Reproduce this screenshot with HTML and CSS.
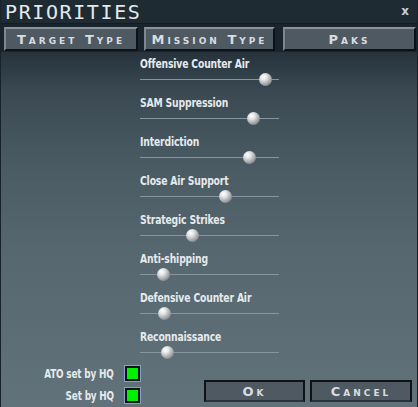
FILE: index.html
```html
<!DOCTYPE html>
<html>
<head>
<meta charset="utf-8">
<link rel="stylesheet" href="styles.css">
</head>
<body>
<div class="window">
  <div class="titlebar">
    <span class="title">PRIORITIES</span>
    <span class="close">x</span>
  </div>
  <div class="tabs">
    <div class="tab tab1">Target Type</div>
    <div class="tab tab2">Mission Type</div>
    <div class="tab tab3">Paks</div>
  </div>
  <div class="body">
    <div class="sliders">
      <div class="item"><div class="label">Offensive Counter Air</div><div class="track"><span class="knob" style="left:125px"></span></div></div>
      <div class="item"><div class="label">SAM Suppression</div><div class="track"><span class="knob" style="left:113px"></span></div></div>
      <div class="item"><div class="label">Interdiction</div><div class="track"><span class="knob" style="left:109px"></span></div></div>
      <div class="item"><div class="label">Close Air Support</div><div class="track"><span class="knob" style="left:85px"></span></div></div>
      <div class="item"><div class="label">Strategic Strikes</div><div class="track"><span class="knob" style="left:52px"></span></div></div>
      <div class="item"><div class="label">Anti-shipping</div><div class="track"><span class="knob" style="left:23px"></span></div></div>
      <div class="item"><div class="label">Defensive Counter Air</div><div class="track"><span class="knob" style="left:24px"></span></div></div>
      <div class="item"><div class="label">Reconnaissance</div><div class="track"><span class="knob" style="left:27px"></span></div></div>
    </div>
    <div class="bottom">
      <div class="checks">
        <div class="crow"><span class="clabel">ATO set by HQ</span><span class="check"></span></div>
        <div class="crow"><span class="clabel">Set by HQ</span><span class="check"></span></div>
      </div>
      <div class="buttons">
        <div class="btn ok">Ok</div>
        <div class="btn cancel">Cancel</div>
      </div>
    </div>
  </div>
</div>
</body>
</html>
```
FILE: styles.css
```css
* { box-sizing: border-box; }
html, body { margin: 0; padding: 0; }
body { background: #1c2830; width: 418px; height: 407px; overflow: hidden; }
.window {
  width: 418px; height: 407px;
  display: flex; flex-direction: column;
  border-left: 1px solid #17222a;
  border-right: 1px solid #17222a;
}
.titlebar {
  height: 24px;
  background: #1f2b33;
  display: flex; align-items: center; justify-content: space-between;
  padding: 0 8px 0 4px;
  border-bottom: 1px solid #141d23;
}
.title {
  font-family: "DejaVu Sans Mono", monospace;
  font-size: 20px;
  letter-spacing: 1.6px;
  color: #e2e8ec;
  line-height: 24px;
  margin-top: 1px;
}
.close {
  font-family: "DejaVu Sans", sans-serif;
  font-weight: bold;
  font-size: 12px;
  color: #c8ced2;
  margin-top: -2px;
}
.tabs {
  height: 28px;
  background: #19242c;
  display: flex;
  padding: 3px 0 0 3px;
}
.tab {
  height: 24px;
  background: #4e5962;
  border-top: 2px solid #88939b;
  border-left: 2px solid #7d8890;
  border-right: 2px solid #0c1318;
  border-bottom: 2px solid #0c1318;
  font-family: "DejaVu Sans", sans-serif;
  font-weight: bold;
  font-variant: small-caps;
  font-size: 13px;
  letter-spacing: 3px;
  color: #d8dde0;
  display: flex; align-items: center; justify-content: center;
  line-height: 1;
}
.tab1 { width: 134px; }
.tab2 { width: 131px; margin-left: 6px; }
.tab3 { width: 133px; margin-left: 8px; }
.body {
  flex: 1;
  background: linear-gradient(to bottom, #26333c 0px, #3a4952 40px, #4a5a63 110px, #56676f 200px, #61727b 354px);
  display: flex; flex-direction: column;
  padding-top: 4px;
}
.sliders {
  display: flex; flex-direction: column;
  gap: 11px;
  padding-left: 139px;
}
.item { width: 139px; }
.label {
  font-family: "DejaVu Sans Condensed", "DejaVu Sans", sans-serif;
  font-weight: bold;
  font-size: 13px;
  line-height: 15px;
  color: #e6eaec;
  white-space: nowrap;
  letter-spacing: -0.2px;
  transform: scaleX(0.79);
  transform-origin: left center;
}
.track {
  position: relative;
  height: 13px;
}
.track::before {
  content: "";
  position: absolute;
  left: 0; right: 0; top: 8px;
  height: 1px;
  background: #8795a0;
}
.knob {
  position: absolute;
  top: 2px;
  width: 13px; height: 13px;
  margin-left: -6px;
  border-radius: 50%;
  background: radial-gradient(circle at 35% 30%, #ffffff 0%, #e4e6e8 25%, #a3a7aa 60%, #55595c 100%);
}
.bottom {
  display: flex;
  margin-top: 8px;
}
.checks {
  width: 140px;
  display: flex; flex-direction: column;
  align-items: flex-end;
  gap: 5px;
}
.crow {
  display: flex; align-items: center; gap: 10px;
  height: 17px;
}
.clabel {
  font-family: "DejaVu Sans Condensed", "DejaVu Sans", sans-serif;
  font-weight: bold;
  font-size: 12px;
  color: #e6eaec;
  letter-spacing: -0.2px;
  display: inline-block;
  transform: scaleX(0.82);
  transform-origin: right center;
}
.check {
  width: 17px; height: 17px;
  border: 1px solid #8aa2bf;
  background: #00f000;
  box-shadow: inset 0 0 0 2px #0d151c;
}
.buttons {
  display: flex; gap: 5px;
  margin-left: 63px;
  margin-top: 15px;
}
.btn {
  height: 22px;
  background: #4e5962;
  border: 2px solid #0d1317;
  border-bottom-color: #2a3339;
  font-family: "DejaVu Sans", sans-serif;
  font-weight: bold;
  font-variant: small-caps;
  font-size: 13px;
  letter-spacing: 3px;
  color: #d8dde0;
  display: flex; align-items: center; justify-content: center;
  line-height: 1;
}
.ok { width: 101px; }
.cancel { width: 102px; }
```
